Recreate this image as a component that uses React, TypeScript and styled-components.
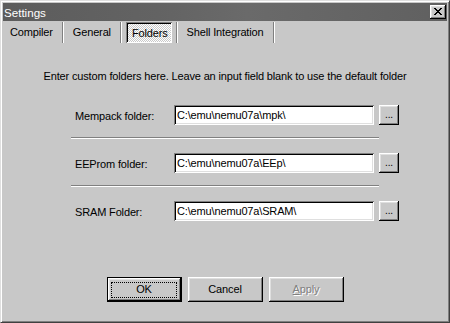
import React from "react";
import styled, { createGlobalStyle, css } from "styled-components";

const BG = "#c8c8c8";

const Global = createGlobalStyle`
  html, body { margin: 0; padding: 0; background: ${BG}; }
  body {
    font-family: "Liberation Sans", Arial, sans-serif;
    font-size: 11px;
    letter-spacing: -0.15px;
    color: #000;
  }
  #root { width: 450px; height: 323px; }
`;

const raised = css`
  box-shadow: inset -1px -1px #000, inset 1px 1px #fff, inset -2px -2px #808080,
    inset 2px 2px #dfdfdf;
`;

const sunken = css`
  box-shadow: inset 1px 1px #808080, inset -1px -1px #fff, inset 2px 2px #000,
    inset -2px -2px #dfdfdf;
`;

const Window = styled.div`
  box-sizing: border-box;
  width: 450px;
  height: 323px;
  background: ${BG};
  border: 1px solid;
  border-color: #dfdfdf #404040 #404040 #dfdfdf;
  box-shadow: inset 1px 1px #fff, inset -1px -1px #808080;
  padding: 2px;
  display: flex;
  flex-direction: column;
`;

const TitleBar = styled.div`
  height: 18px;
  background: linear-gradient(90deg, #5c5c5c 0%, #636363 35%, #6a6a6a 55%, #606060 100%);
  display: flex;
  align-items: center;
  justify-content: space-between;
  padding-left: 1px;
`;

const Title = styled.span`
  color: #fff;
  font-size: 11.6px;
  letter-spacing: 0;
`;

const CloseButton = styled.div`
  box-sizing: border-box;
  width: 16px;
  height: 14px;
  margin-right: 1px;
  background: ${BG};
  ${raised};
  display: flex;
  align-items: center;
  justify-content: center;
  padding-bottom: 1px;
`;

const TabStrip = styled.div`
  height: 21px;
  margin-top: 1px;
  padding-left: 2px;
  display: flex;
  align-items: stretch;
`;

const Tab = styled.div<{ $pressed?: boolean }>`
  box-sizing: border-box;
  padding: 0 5px 1px;
  display: flex;
  align-items: center;
  white-space: nowrap;
  ${(p) =>
    p.$pressed &&
    css`
      padding: 1px 4px 0 6px;
      background: repeating-conic-gradient(#ffffff 0 25%, ${BG} 0 50%) 0 0 / 2px 2px;
      box-shadow: inset 1px 1px #808080, inset -1px -1px #fff, inset 2px 2px #000;
    `}
`;

const TabSep = styled.div`
  width: 2px;
  margin: 0 4px;
  background: linear-gradient(90deg, #808080 50%, #fff 50%);
`;

const Intro = styled.div`
  margin-top: 27px;
  line-height: 13px;
  text-align: center;
`;

const Form = styled.div`
  margin-top: 22px;
  margin-left: 68px;
  display: flex;
  flex-direction: column;
`;

const Row = styled.div`
  height: 20px;
  display: flex;
  align-items: center;
`;

const Label = styled.label`
  box-sizing: border-box;
  width: 103px;
  padding-left: 4px;
  padding-top: 1px;
`;

const PathInput = styled.input`
  box-sizing: border-box;
  width: 200px;
  height: 20px;
  border: none;
  outline: none;
  margin: 0;
  padding: 0 0 0 3px;
  background: #fff;
  font: inherit;
  letter-spacing: inherit;
  color: #000;
  ${sunken};
`;

const Browse = styled.div`
  box-sizing: border-box;
  width: 20px;
  height: 20px;
  margin-left: 5px;
  background: ${BG};
  ${raised};
  display: flex;
  align-items: center;
  justify-content: center;
  font-size: 10px;
  padding-bottom: 2px;
`;

const Separator = styled.div`
  width: 308px;
  height: 2px;
  margin: 12px 0 14px;
  background: linear-gradient(180deg, #808080 50%, #fff 50%);
`;

const ButtonRow = styled.div`
  margin-top: 56px;
  display: flex;
  justify-content: center;
  gap: 6px;
`;

const Button = styled.div<{ $default?: boolean; $disabled?: boolean }>`
  position: relative;
  box-sizing: border-box;
  width: 75px;
  height: 25px;
  background: ${BG};
  display: flex;
  align-items: center;
  justify-content: center;
  padding-bottom: 1px;
  ${raised};
  ${(p) =>
    p.$default &&
    css`
      border: 1px solid #000;
      &::after {
        content: "";
        position: absolute;
        inset: 4px 4px 3px 3px;
        border: 1px dotted #000;
      }
    `}
  ${(p) =>
    p.$disabled &&
    css`
      color: #808080;
      text-shadow: 1px 1px #fff;
    `}
`;

const XIcon = () => (
  <svg width="8" height="7" viewBox="0 0 8 7" shapeRendering="crispEdges">
    <path
      fill="#000"
      d="M0 0h2v1H0zM6 0h2v1H6zM1 1h2v1H1zM5 1h2v1H5zM2 2h4v1H2zM3 3h2v1H3zM2 4h4v1H2zM1 5h2v1H1zM5 5h2v1H5zM0 6h2v1H0zM6 6h2v1H6z"
    />
  </svg>
);

const folders = [
  { label: "Mempack folder:", value: "C:\\emu\\nemu07a\\mpk\\" },
  { label: "EEProm folder:", value: "C:\\emu\\nemu07a\\EEp\\" },
  { label: "SRAM Folder:", value: "C:\\emu\\nemu07a\\SRAM\\" },
];

const tabs = ["Compiler", "General", "Folders", "Shell Integration"];

export default function App() {
  return (
    <>
      <Global />
      <Window>
        <TitleBar>
          <Title>Settings</Title>
          <CloseButton>
            <XIcon />
          </CloseButton>
        </TitleBar>
        <TabStrip>
          {tabs.map((t) => (
            <React.Fragment key={t}>
              <Tab $pressed={t === "Folders"}>{t}</Tab>
              <TabSep />
            </React.Fragment>
          ))}
        </TabStrip>
        <Intro>
          Enter custom folders here. Leave an input field blank to use the default folder
        </Intro>
        <Form>
          {folders.map((f, i) => (
            <React.Fragment key={f.label}>
              {i > 0 && <Separator />}
              <Row>
                <Label>{f.label}</Label>
                <PathInput readOnly value={f.value} />
                <Browse>...</Browse>
              </Row>
            </React.Fragment>
          ))}
        </Form>
        <ButtonRow>
          <Button $default>OK</Button>
          <Button>Cancel</Button>
          <Button $disabled>
            <span>
              <u>A</u>pply
            </span>
          </Button>
        </ButtonRow>
      </Window>
    </>
  );
}
